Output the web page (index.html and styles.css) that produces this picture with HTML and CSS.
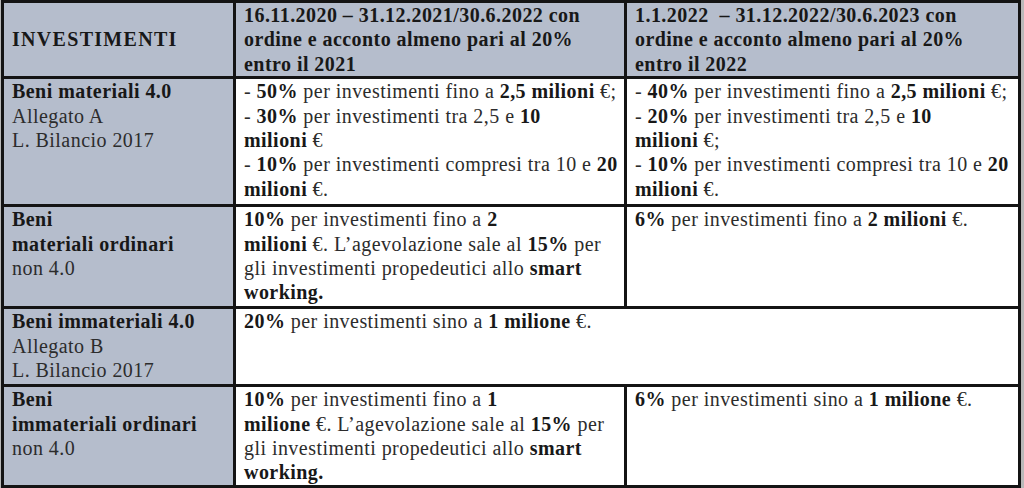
FILE: index.html
```html
<!DOCTYPE html>
<html lang="it">
<head>
<meta charset="utf-8">
<title>Investimenti</title>
<link rel="stylesheet" href="styles.css">
</head>
<body>
<table class="grid">
  <colgroup>
    <col class="c1">
    <col class="c2">
    <col class="c3">
  </colgroup>
  <tr class="r-head">
    <th class="lab mid"><b class="caps">INVESTIMENTI</b></th>
    <th class="lab"><b>16.11.2020 – 31.12.2021/30.6.2022 con<br>ordine e acconto almeno pari al 20%<br>entro il 2021</b></th>
    <th class="lab"><b>1.1.2022&nbsp; – 31.12.2022/30.6.2023 con<br>ordine e acconto almeno pari al 20%<br>entro il 2022</b></th>
  </tr>
  <tr class="r1">
    <td class="lab"><b>Beni materiali 4.0</b><br>Allegato A<br>L. Bilancio 2017</td>
    <td>- <b>50%</b> per investimenti fino a <b>2,5 milioni</b> €;<br>- <b>30%</b> per investimenti tra 2,5 e <b>10</b><br><b>milioni</b> €<br>- <b>10%</b> per investimenti compresi tra 10 e <b>20</b><br><b>milioni</b> €.</td>
    <td>- <b>40%</b> per investimenti fino a <b>2,5 milioni</b> €;<br>- <b>20%</b> per investimenti tra 2,5 e <b>10</b><br><b>milioni</b> €;<br>- <b>10%</b> per investimenti compresi tra 10 e <b>20</b><br><b>milioni</b> €.</td>
  </tr>
  <tr class="r2">
    <td class="lab"><b>Beni<br>materiali ordinari</b><br>non 4.0</td>
    <td><b>10%</b> per investimenti fino a <b>2</b><br><b>milioni</b> €. L’agevolazione sale al <b>15%</b> per<br>gli investimenti propedeutici allo <b>smart</b><br><b>working.</b></td>
    <td><b>6%</b> per investimenti fino a <b>2 milioni</b> €.</td>
  </tr>
  <tr class="r3">
    <td class="lab"><b>Beni immateriali 4.0</b><br>Allegato B<br>L. Bilancio 2017</td>
    <td colspan="2"><b>20%</b> per investimenti sino a <b>1 milione</b> €.</td>
  </tr>
  <tr class="r4">
    <td class="lab"><b>Beni<br>immateriali ordinari</b><br>non 4.0</td>
    <td><b>10%</b> per investimenti fino a <b>1</b><br><b>milione</b> €. L’agevolazione sale al <b>15%</b> per<br>gli investimenti propedeutici allo <b>smart</b><br><b>working.</b></td>
    <td><b>6%</b> per investimenti sino a <b>1 milione</b> €.</td>
  </tr>
</table>
</body>
</html>
```

FILE: styles.css
```css
html, body {
  margin: 0;
  padding: 0;
}
body {
  width: 1024px;
  height: 488px;
  background: #b9b9b9;
  overflow: hidden;
  font-family: "Liberation Serif", "Times New Roman", serif;
  font-size: 20px;
  line-height: 24.4px;
  letter-spacing: 0.45px;
  color: #2c2c2c;
}
.grid {
  margin-left: 1px;
  table-layout: fixed;
  border-collapse: separate;
  border-spacing: 0;
  width: 1020px;
  background: #ffffff;
  border-top: 3px solid #141414;
  border-left: 3px solid #141414;
}
.c1 { width: 232px; }
.c2 { width: 391px; }
.c3 { width: 394px; }
.grid th,
.grid td {
  border-right: 3px solid #141414;
  border-bottom: 3px solid #141414;
  padding: 0 4px 0 8px;
  vertical-align: top;
  text-align: left;
  font-weight: normal;
  white-space: nowrap;
  overflow: hidden;
}
.grid b {
  font-weight: bold;
  color: #181818;
}
.grid .caps {
  letter-spacing: 1.3px;
}
.lab {
  background: #b5bdcc;
}
.mid {
  vertical-align: middle !important;
}
.r-head { height: 75px; }
.r1 { height: 128px; }
.r2 { height: 102px; }
.r3 { height: 78px; }
.r4 { height: 100px; }
```
